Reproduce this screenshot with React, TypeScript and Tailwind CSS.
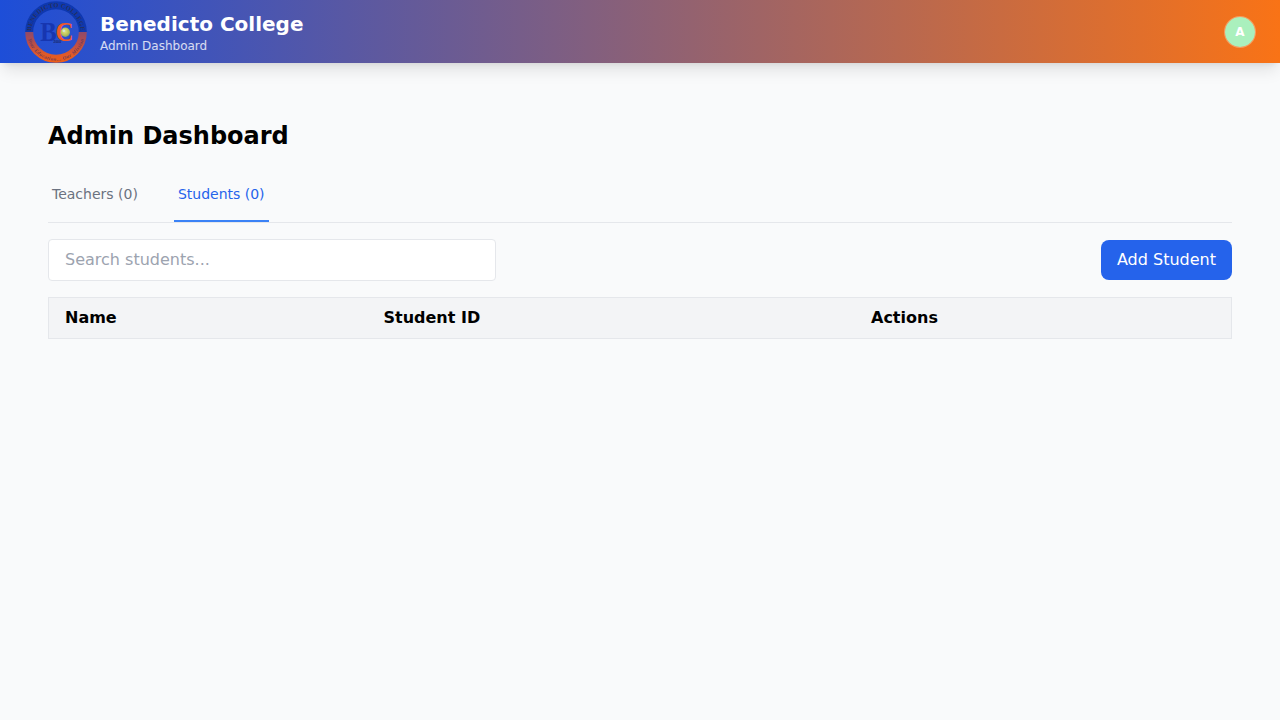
import { useState } from "react";

function Logo() {
  return (
    <svg className="mb-0.5 size-16 shrink-0" viewBox="0 0 64 64" role="img" aria-label="Benedicto College">
      <defs>
        <path id="ring-top" d="M7.3 33 A24.7 24.7 0 0 1 56.7 33" />
        <path id="ring-bottom" d="M3.2 33 A28.8 28.8 0 0 0 60.8 33" />
        <linearGradient id="base" x1="0" y1="33" x2="0" y2="63" gradientUnits="userSpaceOnUse">
          <stop offset="0" stopColor="#8f4a6a" />
          <stop offset="0.35" stopColor="#b54d4c" />
          <stop offset="0.75" stopColor="#e05a28" />
          <stop offset="1" stopColor="#ee5c16" />
        </linearGradient>
        <radialGradient id="globe" cx="0.45" cy="0.4" r="0.65">
          <stop offset="0" stopColor="#e3e486" />
          <stop offset="0.6" stopColor="#b9c256" />
          <stop offset="1" stopColor="#7a9a70" />
        </radialGradient>
      </defs>
      <path d="M5.2 33 A26.8 26.8 0 0 1 58.8 33" fill="none" stroke="#0e38b0" strokeWidth="8" />
      <path d="M5.2 33 A26.8 26.8 0 0 0 58.8 33" fill="none" stroke="url(#base)" strokeWidth="8" />
      <text fill="#25305f" fontFamily="Liberation Serif, serif" fontSize="6.4" fontWeight="700">
        <textPath href="#ring-top" textLength="75" startOffset="1">BENEDICTO COLLEGE</textPath>
      </text>
      <text fill="#703a56" fontFamily="Liberation Serif, serif" fontSize="5" fontStyle="italic" fontWeight="700">
        <textPath href="#ring-bottom" textLength="76" startOffset="7">Your Education... Our Mission</textPath>
      </text>
      <text x="16.2" y="42.3" fill="#1736b0" fontFamily="Liberation Serif, serif" fontSize="27" fontWeight="700" textLength="16.4" lengthAdjust="spacingAndGlyphs">B</text>
      <text x="31.4" y="42.3" fill="#ee592b" fontFamily="Liberation Serif, serif" fontSize="27" fontWeight="700" textLength="18" lengthAdjust="spacingAndGlyphs">C</text>
      <circle cx="41.3" cy="33.3" r="4.7" fill="url(#globe)" />
      <circle cx="39.8" cy="31.7" r="1.3" fill="#d3e6dc" />
      <text x="29.5" y="44.3" fill="#17245f" fontFamily="Liberation Sans, sans-serif" fontSize="3.2" fontWeight="700" textLength="7.5">2000</text>
    </svg>
  );
}

const tabs = ["Teachers", "Students"];

export default function App() {
  const [active, setActive] = useState("Students");
  const [query, setQuery] = useState("");

  return (
    <div className="min-h-screen bg-[#f9fafb] font-['DejaVu_Sans',sans-serif] text-black">
      <header className="flex h-[63px] items-center justify-between bg-[linear-gradient(to_right,#1d4ed8,#f97316)] px-6 shadow-[0_10px_15px_-3px_rgba(0,0,0,0.1),0_4px_6px_-4px_rgba(0,0,0,0.1)]">
        <div className="flex items-center gap-3">
          <Logo />
          <div>
            <h1 className="text-xl leading-7 font-bold text-white">Benedicto College</h1>
            <p className="text-xs leading-4 text-white/80">Admin Dashboard</p>
          </div>
        </div>
        <div className="flex size-8 items-center justify-center rounded-full border border-white/30 bg-[#aaf0bd] bg-clip-padding text-xs font-bold text-white">
          A
        </div>
      </header>

      <main className="px-12 pt-[57px]">
        <h2 className="text-2xl leading-8 font-bold">Admin Dashboard</h2>
        <nav className="mt-6 flex gap-8 border-b border-[#e5e7eb]">
          {tabs.map((tab) => (
            <button
              key={tab}
              onClick={() => setActive(tab)}
              className={
                active === tab
                  ? "h-[46px] border-b-2 border-[#3b82f6] px-1 pb-2 text-sm text-[#2563eb]"
                  : "h-[46px] border-b-2 border-transparent px-1 pb-2 text-sm text-[#6b7280]"
              }
            >
              {tab} (0)
            </button>
          ))}
        </nav>
        <div className="mt-4 flex items-center justify-between">
          <input
            value={query}
            onChange={(e) => setQuery(e.target.value)}
            placeholder={`Search ${active.toLowerCase()}...`}
            className="h-[42px] w-[448px] rounded border border-[#e5e7eb] bg-white px-4 pt-1.5 pb-2 text-base placeholder:text-[#9ca3af]"
          />
          <button className="h-10 rounded-lg bg-[#2563eb] px-4 text-base text-white">Add Student</button>
        </div>
        <table className="mt-4 w-full table-fixed border-separate border-spacing-0 border border-[#e5e7eb] bg-[#f3f4f6] text-left">
          <thead>
            <tr>
              <th className="w-[318.5px] px-4 py-2">Name</th>
              <th className="w-[487.5px] px-4 py-2">Student ID</th>
              <th className="px-4 py-2">Actions</th>
            </tr>
          </thead>
        </table>
      </main>
    </div>
  );
}
